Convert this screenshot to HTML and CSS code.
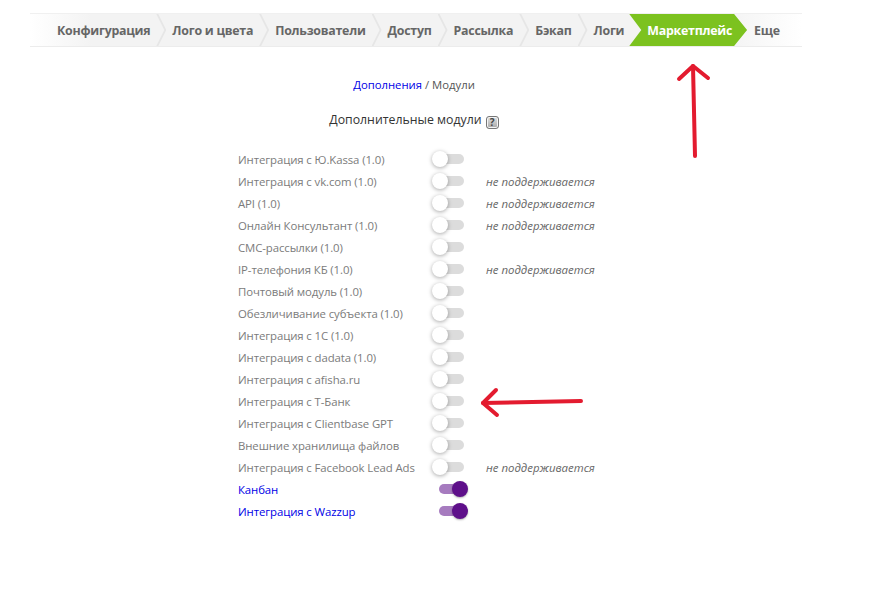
FILE: index.html
```html
<!DOCTYPE html>
<html>
<head>
<meta charset="utf-8">
<link rel="stylesheet" href="styles.css">
</head>
<body>
<div class="tabs">
	<a class="tab">Конфигурация</a>
	<a class="tab">Лого и цвета</a>
	<a class="tab">Пользователи</a>
	<a class="tab">Доступ</a>
	<a class="tab">Рассылка</a>
	<a class="tab">Бэкап</a>
	<a class="tab before-active">Логи</a>
	<a class="tab active">Маркетплейс</a>
	<a class="tab last">Еще</a>
</div>

<div class="content">
	<div class="crumbs"><a href="#">Дополнения</a> / Модули</div>
	<h2 class="title">Дополнительные модули <span class="help">?</span></h2>

	<div class="modules">
		<div class="name">Интеграция с Ю.Kassa (1.0)</div><div class="switch"></div><div class="note"></div>
		<div class="name">Интеграция с vk.com (1.0)</div><div class="switch"></div><div class="note">не поддерживается</div>
		<div class="name">API (1.0)</div><div class="switch"></div><div class="note">не поддерживается</div>
		<div class="name">Онлайн Консультант (1.0)</div><div class="switch"></div><div class="note">не поддерживается</div>
		<div class="name">СМС-рассылки (1.0)</div><div class="switch"></div><div class="note"></div>
		<div class="name">IP-телефония КБ (1.0)</div><div class="switch"></div><div class="note">не поддерживается</div>
		<div class="name">Почтовый модуль (1.0)</div><div class="switch"></div><div class="note"></div>
		<div class="name">Обезличивание субъекта (1.0)</div><div class="switch"></div><div class="note"></div>
		<div class="name">Интеграция с 1С (1.0)</div><div class="switch"></div><div class="note"></div>
		<div class="name">Интеграция с dadata (1.0)</div><div class="switch"></div><div class="note"></div>
		<div class="name">Интеграция с afisha.ru</div><div class="switch"></div><div class="note"></div>
		<div class="name">Интеграция с Т-Банк</div><div class="switch"></div><div class="note"></div>
		<div class="name">Интеграция с Clientbase GPT</div><div class="switch"></div><div class="note"></div>
		<div class="name">Внешние хранилища файлов</div><div class="switch"></div><div class="note"></div>
		<div class="name">Интеграция с Facebook Lead Ads</div><div class="switch"></div><div class="note">не поддерживается</div>
		<a class="name link" href="#">Канбан</a><div class="switch on"></div><div class="note"></div>
		<a class="name link" href="#">Интеграция с Wazzup</a><div class="switch on"></div><div class="note"></div>
	</div>
</div>

<svg class="marks" width="884" height="597" viewBox="0 0 884 597">
	<g fill="none" stroke="#e31b2f" stroke-width="4" stroke-linecap="round" stroke-linejoin="round">
		<path d="M695 156 L693 66"/>
		<path d="M679 79 L693 66 L708 78"/>
		<path d="M581 401 L483 403"/>
		<path d="M496 390 L483 403 L497 415"/>
	</g>
</svg>
</body>
</html>
```

FILE: styles.css
```css
body {
	margin: 0;
	font-family: "Open Sans", "Noto Sans", sans-serif;
	background: #fff;
}

.tabs {
	display: flex;
	margin: 13px 0 0 30px;
	width: 772px;
	height: 34px;
	padding-left: 16px;
	box-sizing: border-box;
	background: linear-gradient(to right, #fff, #f3f3f3 8%, #f3f3f3 90%, #fff);
	border-top: 1px solid #f0f0f0;
	border-bottom: 1px solid #ececec;
}

.tab {
	position: relative;
	padding: 0 11px;
	line-height: 33px;
	font-size: 12.4px;
	font-weight: bold;
	letter-spacing: -0.25px;
	color: #666;
	white-space: nowrap;
}

.tab::after {
	content: "";
	position: absolute;
	right: -5px;
	top: 0;
	width: 10px;
	height: 100%;
	background: #e6e6e6;
	clip-path: polygon(0 0, 2px 0, 100% 50%, 2px 100%, 0 100%, calc(100% - 2px) 50%);
	z-index: 1;
}

.tab.before-active::after,
.tab.active::after,
.tab.last::after {
	display: none;
}

.tab.active {
	margin: 0 -4px 0 -6px;
	padding: 0 15px 0 18px;
	color: #fff;
	background: #7cc21f;
	clip-path: polygon(0 0, calc(100% - 13px) 0, 100% 50%, calc(100% - 13px) 100%, 0 100%, 12px 50%);
}

.content {
	width: 828px;
}

.crumbs {
	margin-top: 30px;
	text-align: center;
	font-size: 11.3px;
	color: #555;
}

.crumbs a {
	color: #0000e6;
	text-decoration: none;
}

.title {
	margin: 19px 0 0;
	text-align: center;
	font-size: 12.3px;
	font-weight: normal;
	color: #333;
}

.help {
	display: inline-block;
	width: 11px;
	height: 11px;
	line-height: 11px;
	margin-left: 1px;
	border: 1px solid #777;
	border-radius: 3px;
	background: linear-gradient(#e2e2e2, #a8a8a8);
	box-shadow: inset 0 0 0 1px #f4f4f4;
	font-size: 10px;
	font-weight: bold;
	color: #444;
	text-align: center;
	vertical-align: -2px;
}

.modules {
	display: grid;
	grid-template-columns: 176px 36px auto;
	column-gap: 18px;
	grid-auto-rows: 22px;
	margin: 19px 0 0 238px;
	align-items: center;
}

.name {
	font-size: 11.4px;
	letter-spacing: -0.1px;
	color: #7b7b7b;
	white-space: nowrap;
}

.link {
	color: #0000e6;
	text-decoration: none;
}

.note {
	font-size: 11.4px;
	font-style: italic;
	color: #666;
	white-space: nowrap;
}

.switch {
	position: relative;
	height: 16px;
}

.switch::before {
	content: "";
	position: absolute;
	left: 8px;
	top: 3px;
	width: 24px;
	height: 10px;
	border-radius: 5px;
	background: #dcdcdc;
}

.switch::after {
	content: "";
	position: absolute;
	left: 0;
	top: 0;
	width: 16px;
	height: 16px;
	border-radius: 50%;
	background: #fff;
	box-shadow: 0 1px 4px rgba(0, 0, 0, 0.35);
}

.switch.on::before {
	left: 7px;
	width: 27px;
	background: #a67bbf;
}

.switch.on::after {
	left: 20px;
	background: #5e0f8a;
	box-shadow: 0 1px 2px rgba(0, 0, 0, 0.3);
}

.marks {
	position: absolute;
	left: 0;
	top: 0;
	pointer-events: none;
}
```
